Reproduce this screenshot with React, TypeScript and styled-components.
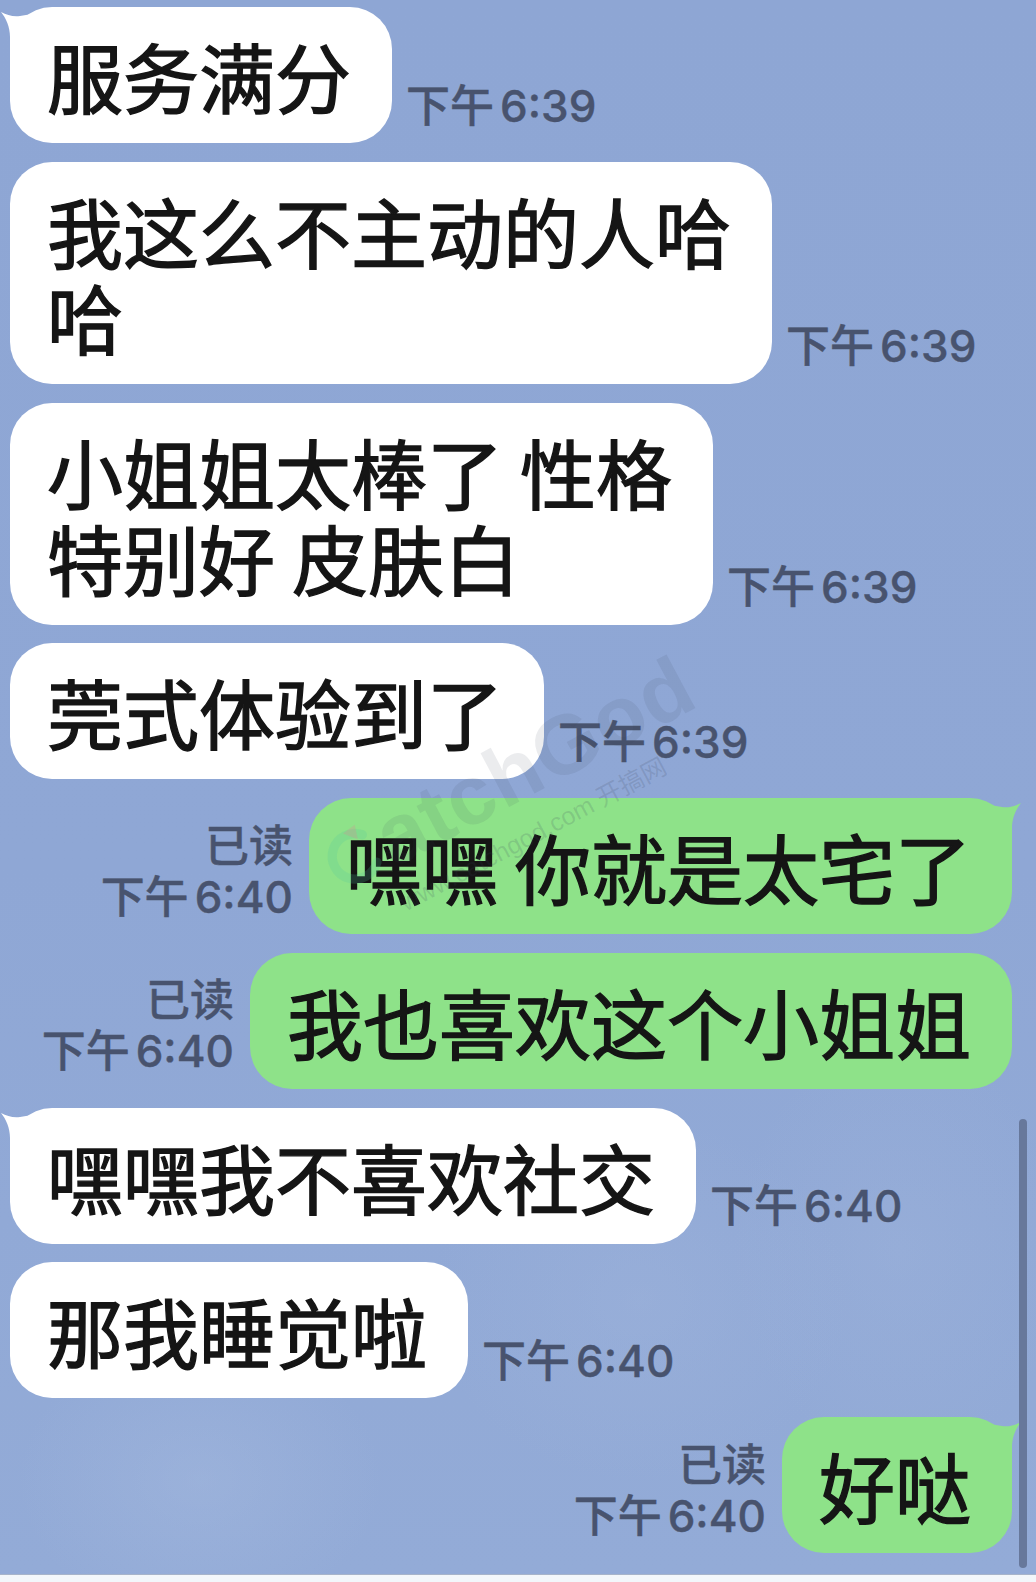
import React from "react";
import styled, { createGlobalStyle } from "styled-components";

const Global = createGlobalStyle`
  html, body { margin: 0; padding: 0; background: #f3f7fb; }
  body { font-family: "Noto Sans CJK SC", sans-serif; }
`;

const Screen = styled.div`
  position: relative;
  width: 1036px;
  height: 1582px;
  overflow: hidden;
  background: #f3f7fb;
`;

const Chat = styled.div`
  position: relative;
  box-sizing: border-box;
  height: 1575px;
  padding: 7px 24px 0 10px;
  display: flex;
  flex-direction: column;
  gap: 18.75px;
  border-bottom: 1px solid #a7b4ca;
  background:
    radial-gradient(ellipse 260px 200px at 200px 1480px, rgba(170, 190, 225, 0.35), transparent 70%),
    radial-gradient(ellipse 300px 260px at 640px 1300px, rgba(165, 185, 222, 0.3), transparent 70%),
    radial-gradient(ellipse 240px 300px at 900px 1250px, rgba(165, 185, 222, 0.25), transparent 70%),
    linear-gradient(180deg, #8ea6d4 0%, #8fa7d5 55%, #93abd7 100%);
`;

const Row = styled.div<{ $out?: boolean }>`
  display: flex;
  align-items: flex-end;
  justify-content: ${(p) => (p.$out ? "flex-end" : "flex-start")};
  gap: ${(p) => (p.$out ? 16 : 14)}px;
`;

const Bubble = styled.div<{ $out?: boolean }>`
  position: relative;
  background: ${(p) => (p.$out ? "#8ee289" : "#ffffff")};
  border-radius: 42px;
  padding: 25px 41px 25px 37px;
  font-family: "Noto Sans CJK SC", sans-serif;
  font-size: 76px;
  line-height: 86px;
  font-weight: 400;
  -webkit-text-stroke: 1.4px #151515;
  color: #151515;
  white-space: nowrap;
`;

const TailSvg = styled.svg<{ $out?: boolean }>`
  position: absolute;
  top: 0;
  width: 40px;
  height: 46px;
  ${(p) => (p.$out ? "right: -12px; transform: scaleX(-1);" : "left: -12px;")}
`;

const Meta = styled.div`
  font-family: Inter, "Noto Sans CJK SC", sans-serif;
  font-size: 44px;
  line-height: 51px;
  font-weight: 500;
  -webkit-text-stroke: 0.4px #48536e;
  color: #48536e;
  text-align: right;
  margin-bottom: 11.5px;
  white-space: nowrap;
`;

const Clock = styled.span`
  margin-left: 6px;
`;

const ScrollBar = styled.div`
  position: absolute;
  right: 9px;
  top: 1119px;
  width: 8px;
  height: 449px;
  border-radius: 4px;
  background: #67789b;
`;

const Watermark = styled.div`
  position: absolute;
  left: 312px;
  top: 728px;
  width: 420px;
  transform: rotate(-28deg);
  pointer-events: none;
  display: flex;
  flex-direction: column;
  align-items: flex-start;
`;

const WmWord = styled.div`
  display: flex;
  align-items: center;
  font-family: "Liberation Sans", sans-serif;
  font-weight: 700;
  font-size: 84px;
  line-height: 1;
  letter-spacing: 1px;
  color: rgba(55, 65, 90, 0.1);
`;

const WmSmall = styled.div`
  margin: 2px 0 0 50px;
  font-family: "Liberation Sans", "Noto Sans CJK SC", sans-serif;
  font-size: 25px;
  color: rgba(55, 65, 90, 0.16);
`;

function Tail({ out }: { out?: boolean }) {
  return (
    <TailSvg $out={out} viewBox="0 0 40 46">
      <path
        d="M3 5 C 9 8, 15 10, 22 9 L 40 6 L 40 46 L 12 46 L 12 30 C 12 20, 8 11, 3 5 Z"
        fill={out ? "#8ee289" : "#ffffff"}
      />
    </TailSvg>
  );
}

type Msg = { out?: boolean; lines: string[]; time: string; tail?: boolean };

const messages: Msg[] = [
  { lines: ["服务满分"], time: "6:39", tail: true },
  { lines: ["我这么不主动的人哈", "哈"], time: "6:39" },
  { lines: ["小姐姐太棒了 性格", "特别好 皮肤白"], time: "6:39" },
  { lines: ["莞式体验到了"], time: "6:39" },
  { out: true, lines: ["嘿嘿 你就是太宅了"], time: "6:40", tail: true },
  { out: true, lines: ["我也喜欢这个小姐姐"], time: "6:40" },
  { lines: ["嘿嘿我不喜欢社交"], time: "6:40", tail: true },
  { lines: ["那我睡觉啦"], time: "6:40" },
  { out: true, lines: ["好哒"], time: "6:40", tail: true },
];

function Message({ m }: { m: Msg }) {
  const bubble = (
    <Bubble $out={m.out}>
      {m.tail && <Tail out={m.out} />}
      {m.lines.map((l, i) => (
        <React.Fragment key={i}>
          {i > 0 && <br />}
          {l}
        </React.Fragment>
      ))}
    </Bubble>
  );
  const time = (
    <>
      下午<Clock>{m.time}</Clock>
    </>
  );
  if (m.out) {
    return (
      <Row $out>
        <Meta>
          已读
          <br />
          {time}
        </Meta>
        {bubble}
      </Row>
    );
  }
  return (
    <Row>
      {bubble}
      <Meta>{time}</Meta>
    </Row>
  );
}

export default function App() {
  return (
    <Screen>
      <Global />
      <Chat>
        {messages.map((m, i) => (
          <Message key={i} m={m} />
        ))}
        <Watermark>
          <WmWord>
            <svg width="60" height="60" viewBox="0 0 58 58">
              <path
                d="M46 14 A 22 22 0 1 0 46 44"
                fill="none"
                stroke="rgba(80, 200, 160, 0.2)"
                strokeWidth="9"
                strokeLinecap="round"
              />
              <path d="M30 4 L 44 2 L 40 16 Z" fill="rgba(235, 120, 150, 0.22)" />
            </svg>
            atchGod
          </WmWord>
          <WmSmall>www.catchgod.com 开搞网</WmSmall>
        </Watermark>
      </Chat>
      <ScrollBar />
    </Screen>
  );
}
